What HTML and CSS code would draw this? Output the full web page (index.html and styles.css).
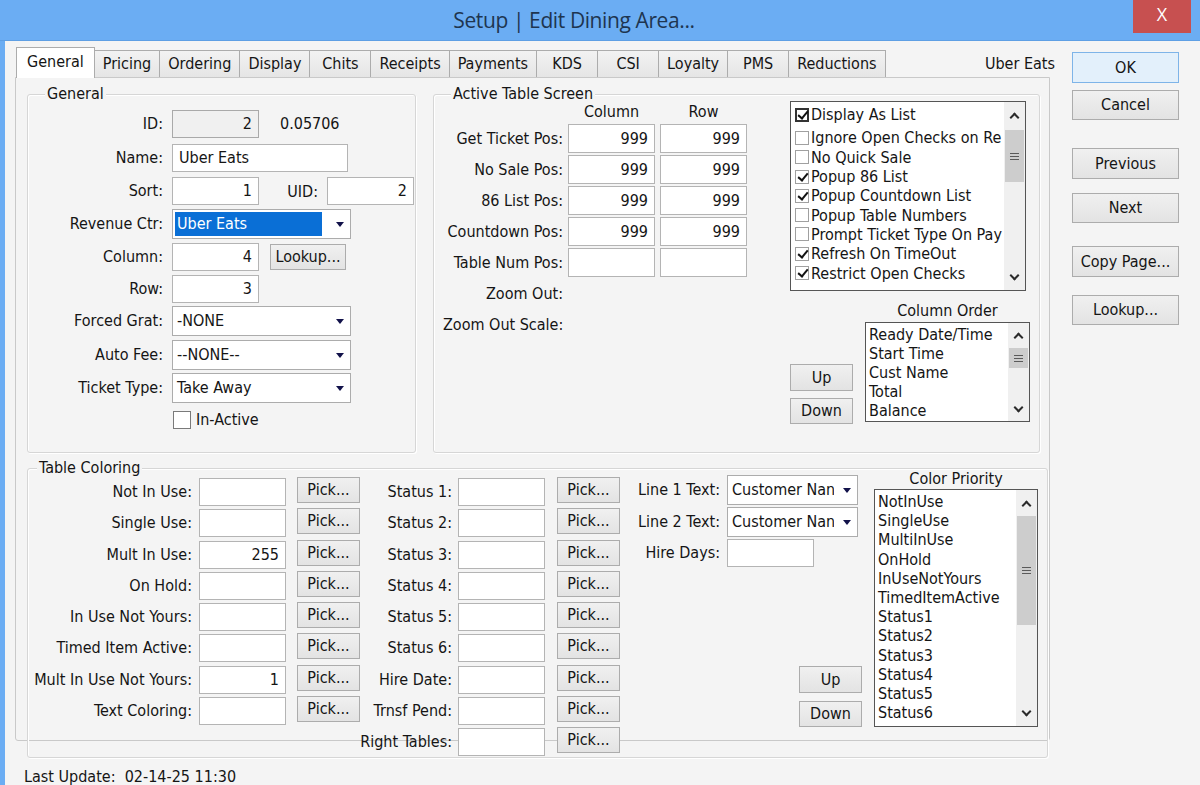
FILE: index.html
```html
<!DOCTYPE html>
<html lang="en">
<head>
<meta charset="utf-8">
<title>Setup | Edit Dining Area...</title>
<link rel="stylesheet" href="styles.css">
</head>
<body>
<div class="window">
  <div class="titlebar">
    <div class="title">Setup | Edit Dining Area...</div>
    <div class="close">X</div>
  </div>
  <div class="client">
    <div class="main">
      <div class="tabstrip">
        <div class="tab active">General</div>
        <div class="tab">Pricing</div>
        <div class="tab">Ordering</div>
        <div class="tab">Display</div>
        <div class="tab">Chits</div>
        <div class="tab">Receipts</div>
        <div class="tab">Payments</div>
        <div class="tab">KDS</div>
        <div class="tab">CSI</div>
        <div class="tab">Loyalty</div>
        <div class="tab">PMS</div>
        <div class="tab">Reductions</div>
        <div class="area-name">Uber Eats</div>
      </div>
      <div class="panel">
        <div class="toprow">
          <div class="group general">
            <div class="group-title">General</div>
            <div class="gen-grid">
              <div class="lbl">ID:</div>
              <div class="ctl"><div class="edit num dis w87">2</div><span class="note">0.05706</span></div>
              <div class="lbl">Name:</div>
              <div class="ctl"><div class="edit w176">Uber Eats</div></div>
              <div class="lbl">Sort:</div>
              <div class="ctl"><div class="edit num w87">1</div><span class="uid-lbl">UID:</span><div class="edit num w87">2</div></div>
              <div class="lbl tall">Revenue Ctr:</div>
              <div class="ctl"><div class="combo"><span class="combo-text sel">Uber Eats</span><span class="combo-arrow"></span></div></div>
              <div class="lbl">Column:</div>
              <div class="ctl"><div class="edit num w87">4</div><div class="btn lookup">Lookup...</div></div>
              <div class="lbl">Row:</div>
              <div class="ctl"><div class="edit num w87">3</div></div>
              <div class="lbl tall">Forced Grat:</div>
              <div class="ctl"><div class="combo"><span class="combo-text">-NONE</span><span class="combo-arrow"></span></div></div>
              <div class="lbl tall">Auto Fee:</div>
              <div class="ctl"><div class="combo"><span class="combo-text">--NONE--</span><span class="combo-arrow"></span></div></div>
              <div class="lbl tall">Ticket Type:</div>
              <div class="ctl"><div class="combo"><span class="combo-text">Take Away</span><span class="combo-arrow"></span></div></div>
              <div></div>
              <div class="ctl inactive"><span class="cb-lg"></span><span>In-Active</span></div>
            </div>
          </div>

          <div class="group ats">
            <div class="group-title">Active Table Screen</div>
            <div class="ats-body">
              <div class="pos-grid">
                <div></div><div class="hdr">Column</div><div class="hdr">Row</div>
                <div class="lbl">Get Ticket Pos:</div><div class="edit num">999</div><div class="edit num">999</div>
                <div class="lbl">No Sale Pos:</div><div class="edit num">999</div><div class="edit num">999</div>
                <div class="lbl">86 List Pos:</div><div class="edit num">999</div><div class="edit num">999</div>
                <div class="lbl">Countdown Pos:</div><div class="edit num">999</div><div class="edit num">999</div>
                <div class="lbl">Table Num Pos:</div><div class="edit num"></div><div class="edit num"></div>
                <div class="lbl">Zoom Out:</div><div></div><div></div>
                <div class="lbl">Zoom Out Scale:</div><div></div><div></div>
              </div>
              <div class="ats-right">
                <div class="listbox checklist">
                  <div class="list-items">
                    <div class="ci first"><span class="cb on focus"></span>Display As List</div>
                    <div class="ci"><span class="cb"></span>Ignore Open Checks on Re</div>
                    <div class="ci"><span class="cb"></span>No Quick Sale</div>
                    <div class="ci"><span class="cb on"></span>Popup 86 List</div>
                    <div class="ci"><span class="cb on"></span>Popup Countdown List</div>
                    <div class="ci"><span class="cb"></span>Popup Table Numbers</div>
                    <div class="ci"><span class="cb"></span>Prompt Ticket Type On Pay</div>
                    <div class="ci"><span class="cb on"></span>Refresh On TimeOut</div>
                    <div class="ci"><span class="cb on"></span>Restrict Open Checks</div>
                  </div>
                  <div class="vscroll">
                    <div class="sb-arrow"><span class="chev up"></span></div>
                    <div class="sb-track"><div class="sb-thumb thumb-check"><span class="grip"></span></div></div>
                    <div class="sb-arrow"><span class="chev down"></span></div>
                  </div>
                </div>
                <div class="order-row">
                  <div class="updown">
                    <div class="btn up-btn">Up</div>
                    <div class="btn down-btn">Down</div>
                  </div>
                  <div class="order-block">
                    <div class="list-caption order-caption">Column Order</div>
                    <div class="listbox order-list">
                      <div class="list-items">
                        <div class="li">Ready Date/Time</div>
                        <div class="li">Start Time</div>
                        <div class="li">Cust Name</div>
                        <div class="li">Total</div>
                        <div class="li">Balance</div>
                      </div>
                      <div class="vscroll">
                        <div class="sb-arrow short"><span class="chev up"></span></div>
                        <div class="sb-track"><div class="sb-thumb thumb-order"><span class="grip"></span></div></div>
                        <div class="sb-arrow short"><span class="chev down"></span></div>
                      </div>
                    </div>
                  </div>
                </div>
              </div>
            </div>
          </div>
        </div>

        <div class="group tc">
          <div class="group-title">Table Coloring</div>
          <div class="tc-body">
            <div class="tc-grid tc-a">
              <div class="lbl">Not In Use:</div><div class="edit num w87"></div><div class="btn pick">Pick...</div>
              <div class="lbl">Single Use:</div><div class="edit num w87"></div><div class="btn pick">Pick...</div>
              <div class="lbl">Mult In Use:</div><div class="edit num w87">255</div><div class="btn pick">Pick...</div>
              <div class="lbl">On Hold:</div><div class="edit num w87"></div><div class="btn pick">Pick...</div>
              <div class="lbl">In Use Not Yours:</div><div class="edit num w87"></div><div class="btn pick">Pick...</div>
              <div class="lbl">Timed Item Active:</div><div class="edit num w87"></div><div class="btn pick">Pick...</div>
              <div class="lbl">Mult In Use Not Yours:</div><div class="edit num w87">1</div><div class="btn pick">Pick...</div>
              <div class="lbl">Text Coloring:</div><div class="edit num w87"></div><div class="btn pick">Pick...</div>
            </div>
            <div class="tc-grid tc-b">
              <div class="lbl">Status 1:</div><div class="edit num w87"></div><div class="btn pick">Pick...</div>
              <div class="lbl">Status 2:</div><div class="edit num w87"></div><div class="btn pick">Pick...</div>
              <div class="lbl">Status 3:</div><div class="edit num w87"></div><div class="btn pick">Pick...</div>
              <div class="lbl">Status 4:</div><div class="edit num w87"></div><div class="btn pick">Pick...</div>
              <div class="lbl">Status 5:</div><div class="edit num w87"></div><div class="btn pick">Pick...</div>
              <div class="lbl">Status 6:</div><div class="edit num w87"></div><div class="btn pick">Pick...</div>
              <div class="lbl">Hire Date:</div><div class="edit num w87"></div><div class="btn pick">Pick...</div>
              <div class="lbl">Trnsf Pend:</div><div class="edit num w87"></div><div class="btn pick">Pick...</div>
              <div class="lbl">Right Tables:</div><div class="edit num w87"></div><div class="btn pick">Pick...</div>
            </div>
            <div class="tc-lines">
              <div class="lines-grid">
                <div class="lbl tall">Line 1 Text:</div>
                <div class="combo small"><span class="combo-text">Customer Nan</span><span class="combo-arrow"></span></div>
                <div class="lbl tall">Line 2 Text:</div>
                <div class="combo small"><span class="combo-text">Customer Nan</span><span class="combo-arrow"></span></div>
                <div class="lbl">Hire Days:</div>
                <div class="edit num w87"></div>
              </div>
              <div class="updown updown-tc">
                <div class="btn up-btn">Up</div>
                <div class="btn down-btn">Down</div>
              </div>
            </div>
            <div class="tc-priority">
              <div class="list-caption">Color Priority</div>
              <div class="listbox priority-list">
                <div class="list-items">
                  <div class="li">NotInUse</div>
                  <div class="li">SingleUse</div>
                  <div class="li">MultiInUse</div>
                  <div class="li">OnHold</div>
                  <div class="li">InUseNotYours</div>
                  <div class="li">TimedItemActive</div>
                  <div class="li">Status1</div>
                  <div class="li">Status2</div>
                  <div class="li">Status3</div>
                  <div class="li">Status4</div>
                  <div class="li">Status5</div>
                  <div class="li">Status6</div>
                </div>
                <div class="vscroll">
                  <div class="sb-arrow"><span class="chev up"></span></div>
                  <div class="sb-track"><div class="sb-thumb thumb-priority"><span class="grip"></span></div></div>
                  <div class="sb-arrow"><span class="chev down"></span></div>
                </div>
              </div>
            </div>
          </div>
        </div>
      </div>
      <div class="status">Last Update:&nbsp; 02-14-25 11:30</div>
    </div>

    <div class="side">
      <div class="btn side-btn ok">OK</div>
      <div class="btn side-btn cancel">Cancel</div>
      <div class="btn side-btn previous">Previous</div>
      <div class="btn side-btn next">Next</div>
      <div class="btn side-btn copy">Copy Page...</div>
      <div class="btn side-btn lookup2">Lookup...</div>
    </div>
  </div>
</div>
</body>
</html>
```

FILE: styles.css
```css
* { box-sizing: border-box; }

html, body { margin: 0; padding: 0; }

body {
  width: 1200px;
  height: 785px;
  overflow: hidden;
  background: #f4f4f4;
  color: #151515;
  font-family: "DejaVu Sans Condensed", "DejaVu Sans", sans-serif;
  font-stretch: condensed;
  font-size: 16px;
}

.window { height: 785px; display: flex; flex-direction: column; }

/* ---------- title bar ---------- */
.titlebar {
  flex: none;
  height: 41px;
  background: #6badf3;
  display: flex;
  align-items: flex-start;
  border-bottom: 1px solid #5e9fe4;
}
.title {
  flex: 1;
  text-align: center;
  padding-left: 15px;
  font-family: "Open Sans", "Noto Sans", sans-serif;
  font-stretch: normal;
  font-size: 21px;
  letter-spacing: -0.4px;
  line-height: 40px;
  color: #1e3550;
}
.close {
  width: 58px;
  height: 33px;
  margin-right: 9px;
  background: #c75050;
  color: #fff;
  text-align: center;
  font-family: "Open Sans", "DejaVu Sans", sans-serif;
  font-stretch: normal;
  font-size: 18px;
  line-height: 29px;
}

/* ---------- client ---------- */
.client {
  flex: 1;
  display: flex;
  border-left: 5px solid #6badf3;
}
.main { width: 1035px; margin-left: 10px; flex: none; }

.tabstrip {
  height: 36px;
  display: flex;
  align-items: flex-end;
  padding-left: 1px;
}
.tab {
  height: 27px;
  min-width: 62px;
  padding: 0 8px;
  margin-left: -1px;
  border: 1px solid #acacac;
  border-bottom: none;
  background: linear-gradient(#f2f2f2, #e5e5e5);
  text-align: center;
  line-height: 26px;
  white-space: nowrap;
}
.tab.active {
  position: relative;
  z-index: 1;
  height: 31px;
  margin-left: 0;
  margin-bottom: -1px;
  padding: 0 10px;
  background: #fff;
  line-height: 28px;
}
.area-name {
  margin-left: auto;
  margin-right: -5px;
  margin-bottom: 4px;
  line-height: 18px;
}

.panel {
  height: 664px;
  border: 1px solid #c9c9c9;
  border-radius: 0 0 3px 3px;
  padding: 16px 1px 0 11px;
}

.status {
  margin-top: 27px;
  padding-left: 9px;
  line-height: 18px;
}

/* ---------- group boxes ---------- */
.group {
  border: 1px solid #d6d6d6;
  border-radius: 3px;
  box-shadow: inset 1px 1px 0 #fff, 1px 1px 0 #fff;
}
.group-title {
  width: max-content;
  margin: -10px 0 0 8px;
  padding: 0 2px;
  background: #f4f4f4;
  line-height: 18px;
}
.toprow { display: flex; }

.lbl {
  text-align: right;
  white-space: nowrap;
  line-height: 28px;
}
.lbl.tall { line-height: 30px; }

/* ---------- controls ---------- */
.edit {
  height: 28px;
  background: #fff;
  border: 1px solid #b4b4b4;
  padding: 0 6px;
  line-height: 26px;
  white-space: nowrap;
  overflow: hidden;
}
.edit.num { text-align: right; }
.edit.dis { background: #f0f0f0; border-color: #a9a9a9; }
.w87 { width: 87px; }
.w176 { width: 176px; }

.combo {
  width: 179px;
  height: 30px;
  background: #fff;
  border: 1px solid #acacac;
  display: flex;
  align-items: center;
  padding-left: 2px;
}
.combo-text {
  flex: 1;
  padding-left: 2px;
  white-space: nowrap;
  overflow: hidden;
  line-height: 24px;
}
.combo-text.sel {
  flex: none;
  width: 147px;
  height: 24px;
  background: #0a6fd6;
  color: #fff;
}
.combo-arrow {
  width: 0;
  height: 0;
  margin: 0 6px 0 auto;
  border-left: 4.5px solid transparent;
  border-right: 4.5px solid transparent;
  border-top: 5px solid #12124a;
  flex: none;
}
.combo.small { width: 131px; }
.combo.small .combo-text { flex: none; width: 104px; }

.btn {
  border: 1px solid #acacac;
  background: linear-gradient(#f0f0f0, #e3e3e3);
  text-align: center;
  white-space: nowrap;
}

/* ---------- General group ---------- */
.general { width: 389px; height: 359px; padding-left: 9px; }
.gen-grid {
  display: grid;
  grid-template-columns: 126px auto;
  grid-template-rows: 34px 33px 32px 34px 32px 31px 34px 33px 37px 20px;
  column-gap: 9px;
  margin-top: 7px;
  align-items: start;
}
.ctl { display: flex; align-items: center; }
.note { margin-left: 21px; margin-top: -2px; }
.uid-lbl { width: 68px; padding-right: 9px; text-align: right; }
.lookup { width: 76px; height: 26px; line-height: 24px; margin-left: 11px; }
.inactive { padding-left: 1px; }
.cb-lg {
  width: 18px;
  height: 18px;
  margin-right: 5px;
  background: #fff;
  border: 1px solid #7a7a7a;
}

/* ---------- Active Table Screen ---------- */
.ats { width: 607px; height: 359px; margin-left: 17px; padding-left: 9px; }
.ats-body { display: flex; align-items: flex-start; }
.pos-grid {
  display: grid;
  grid-template-columns: 120px 87px 87px;
  grid-template-rows: 19px repeat(7, 29px);
  column-gap: 5px;
  row-gap: 2px;
}
.pos-grid .lbl { line-height: 29px; }
.pos-grid .edit { height: 29px; line-height: 27px; }
.hdr { text-align: center; line-height: 17px; }

.ats-right { width: 240px; margin-left: 43px; margin-top: -2px; }

.listbox {
  display: flex;
  background: #fff;
  border: 1px solid #555;
}
.list-items {
  flex: 1;
  min-width: 0;
  overflow: hidden;
  padding: 2px 0 0 3px;
}
.li { height: 19px; line-height: 19px; white-space: nowrap; }

.checklist { width: 236px; height: 190px; }
.checklist .list-items { padding: 3px 0 0 4px; }
.ci {
  display: flex;
  align-items: center;
  height: 19.3px;
  white-space: nowrap;
}
.ci.first { margin-bottom: 4px; }
.cb {
  flex: none;
  width: 14px;
  height: 14px;
  margin-right: 2px;
  background: #fff;
  border: 1px solid #a0a0a0;
}
.cb.focus { border: 2px solid #333; }
.cb.on::after {
  content: "";
  display: block;
  width: 4px;
  height: 8px;
  margin: 0 0 0 4px;
  border: solid #111;
  border-width: 0 2px 2px 0;
  transform: rotate(40deg);
}
.cb.focus.on::after { margin: -1px 0 0 3px; }

.vscroll {
  flex: none;
  width: 21px;
  display: flex;
  flex-direction: column;
  background: #f0f0f0;
}
.sb-arrow {
  height: 26px;
  display: flex;
  align-items: center;
  justify-content: center;
}
.sb-arrow.short { height: 24px; }
.sb-track { flex: 1; }
.sb-thumb {
  margin: 0 1px;
  background: #cdcdcd;
  display: flex;
  align-items: center;
  justify-content: center;
}
.thumb-check { margin-top: 2px; height: 52px; }
.thumb-order { margin-top: 1px; height: 20px; }
.thumb-priority { height: 109px; }
.grip {
  width: 9px;
  height: 7px;
  background: repeating-linear-gradient(#5a5a5a 0 1px, transparent 1px 3px);
}
.chev {
  width: 7px;
  height: 7px;
  border-left: 2px solid #2b2b2b;
  border-top: 2px solid #2b2b2b;
}
.chev.up { transform: rotate(45deg); margin-top: 4px; }
.chev.down { transform: rotate(225deg); margin-top: -4px; }

.order-row { display: flex; }
.updown {
  display: flex;
  flex-direction: column;
  gap: 7px;
  align-self: flex-end;
  margin-bottom: -2px;
}
.up-btn { width: 63px; height: 27px; line-height: 25px; }
.down-btn { width: 63px; height: 26px; line-height: 24px; }
.order-block { width: 165px; margin-left: 12px; }
.list-caption { text-align: center; line-height: 18px; }
.order-caption { margin-top: 10px; line-height: 20px; }
.order-list { height: 100px; margin-top: 1px; }

/* ---------- Table Coloring ---------- */
.tc { width: 1021px; height: 290px; margin-top: 15px; }
.tc .group-title { margin-left: 9px; }
.tc-body { display: flex; align-items: flex-start; margin-top: 1px; }
.tc-grid {
  display: grid;
  grid-template-rows: repeat(9, 28px);
  row-gap: 3.25px;
  align-items: start;
}
.tc-a { grid-template-columns: 171px 98px 63px; }
.tc-b { grid-template-columns: 98px 99px 63px; }
.tc-a .lbl { padding-right: 7px; }
.tc-b .lbl { padding-right: 6px; }
.pick { width: 63px; height: 26px; line-height: 24px; margin-top: -1px; }

.tc-lines {
  width: 227px;
  margin-left: 15px;
  margin-top: -3px;
  display: flex;
  flex-direction: column;
}
.lines-grid {
  display: grid;
  grid-template-columns: 85px 131px;
  grid-template-rows: 30px 30px 28px;
  column-gap: 7px;
  row-gap: 2px;
}
.updown-tc { margin-top: 99px; margin-bottom: 0; gap: 8px; }

.tc-priority { width: 164px; margin-left: 12px; margin-top: -8px; }
.priority-list { height: 238px; margin-top: 1px; }
.priority-list .li { height: 19.2px; line-height: 19.2px; }

/* ---------- right buttons ---------- */
.side {
  width: 107px;
  margin-left: 22px;
  padding-top: 11px;
  display: flex;
  flex-direction: column;
}
.side-btn { height: 30px; line-height: 28px; }
.ok {
  height: 31px;
  line-height: 29px;
  background: #e3f0fb;
  border-color: #7eb4e8;
}
.cancel { margin-top: 7px; }
.previous { margin-top: 28px; height: 31px; line-height: 29px; }
.next { margin-top: 14px; }
.copy { margin-top: 23px; height: 31px; line-height: 29px; }
.lookup2 { margin-top: 18px; }
```
